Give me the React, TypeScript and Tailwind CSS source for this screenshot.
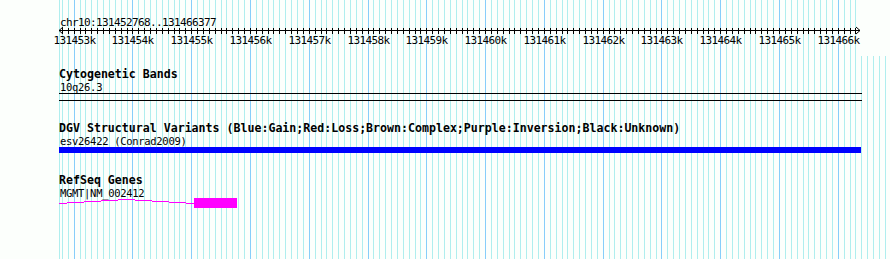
import React from "react";

const START = 131452768;
const END = 131466377;
const X0 = 60;
const W = 800;

const toX = (p: number) => Math.round(X0 + ((p - START) * W) / (END - START + 1));

// grid lines every 100bp, darker every 1kb
function gridLines(maxX: number) {
  const lines: { x: number; major: boolean }[] = [];
  for (let p = Math.ceil(START / 100) * 100; ; p += 100) {
    const x = toX(p);
    if (x > maxX) break;
    lines.push({ x, major: p % 1000 === 0 });
  }
  return lines;
}

function Grid() {
  const rulerLines = gridLines(toX(END));
  const trackLines = gridLines(889);
  return (
    <svg className="absolute left-0 top-0" width={890} height={259} shapeRendering="crispEdges">
      <line x1={59.5} x2={59.5} y1={0} y2={259} stroke="#afeeee" />
      {rulerLines.map((l) => (
        <line key={"r" + l.x} x1={l.x + 0.5} x2={l.x + 0.5} y1={0} y2={56} stroke={l.major ? "#87cefa" : "#afeeee"} />
      ))}
      {trackLines.map((l) => (
        <line key={"t" + l.x} x1={l.x + 0.5} x2={l.x + 0.5} y1={56} y2={259} stroke={l.major ? "#87cefa" : "#afeeee"} />
      ))}
    </svg>
  );
}

function Ruler() {
  const ticks: { x: number; p: number }[] = [];
  for (let p = Math.ceil(START / 100) * 100; p <= END; p += 100) ticks.push({ x: toX(p), p });
  const right = toX(END);
  return (
    <svg width={890} height={56} className="block" shapeRendering="crispEdges">
      <text x={60} y={26} fontSize={11} letterSpacing={-0.62} fill="#000" shapeRendering="auto">
        chr10:131452768..131466377
      </text>
      <line x1={59} x2={right} y1={30.5} y2={30.5} stroke="#000" />
      <polyline points={`63,27 59,30.5 63,34`} fill="none" stroke="#000" shapeRendering="auto" />
      <polyline points={`${right - 4},27 ${right},30.5 ${right - 4},34`} fill="none" stroke="#000" shapeRendering="auto" />
      {ticks.map((t) => (
        <line key={t.p} x1={t.x + 0.5} x2={t.x + 0.5} y1={28} y2={34} stroke="#000" />
      ))}
      {ticks
        .filter((t) => t.p % 1000 === 0)
        .map((t) => (
          <text key={"l" + t.p} x={t.x + 0.5} y={44} fontSize={11} letterSpacing={-0.62} textAnchor="middle" fill="#000" shapeRendering="auto">
            {t.p / 1000}k
          </text>
        ))}
    </svg>
  );
}

function Track({ title, sub, className, children }: { title: string; sub: string; className?: string; children: React.ReactNode }) {
  return (
    <div className={className}>
      <div className="pl-[59px] text-[11.6px] leading-[12px] font-bold whitespace-nowrap">{title}</div>
      <div className="mt-px pl-[60px] text-[10.5px] leading-[12px] tracking-[-0.3px] whitespace-nowrap">{sub}</div>
      {children}
    </div>
  );
}

export default function App() {
  return (
    <div className="relative h-[259px] w-[890px] overflow-hidden bg-[#fcfffc] text-black font-['DejaVu_Sans_Mono','Liberation_Mono',monospace]">
      <Grid />
      <div className="relative">
        <Ruler />

        {/* Cytogenetic Bands */}
        <Track title="Cytogenetic Bands" sub="10q26.3" className="mt-[12px]">
          <div className="h-[9px]">
            <div className="ml-[59px] h-px w-[803px] bg-black" />
            <div className="ml-[59px] mt-[6px] h-px w-[803px] bg-black" />
          </div>
        </Track>

        {/* DGV */}
        <Track
          title="DGV Structural Variants (Blue:Gain;Red:Loss;Brown:Complex;Purple:Inversion;Black:Unknown)"
          sub="esv26422 (Conrad2009)"
          className="mt-[20px]"
        >
          <div className="h-[7px]">
            <div className="ml-[59px] h-[6px] w-[802px] bg-[#0000ff]" />
          </div>
        </Track>

        {/* RefSeq */}
        <Track title="RefSeq Genes" sub="MGMT|NM_002412" className="mt-[20px]">
          <svg width={890} height={11} className="-mt-px block">
            <polyline points="59,5.5 126.5,1.5 194,5.5" fill="none" stroke="#ff00ff" shapeRendering="crispEdges" />
            <rect x={194} y={0} width={43} height={10} fill="#ff00ff" />
          </svg>
        </Track>
      </div>
    </div>
  );
}
